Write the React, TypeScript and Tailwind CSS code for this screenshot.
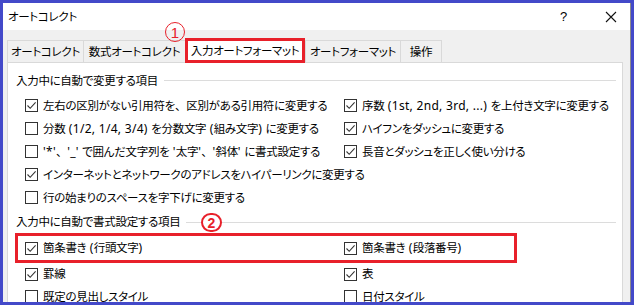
import React from 'react';

const font = "font-['Noto_Sans_CJK_JP','Noto_Sans',sans-serif] [font-feature-settings:'palt']";

// Latin runs are set a little wider and the ideographic comma keeps its full width, as in the dialog font
const Label: React.FC<{ text: string }> = ({ text }) => {
  const parts = text.split(/([\x20-\x7e]+|、)/).filter((p) => p !== '');
  return (
    <span className="whitespace-nowrap">
      {parts.map((p, i) =>
        p === '、' ? (
          <span key={i} className="[font-feature-settings:normal]">{p}</span>
        ) : /^[\x20-\x7e]+$/.test(p) ? (
          <span key={i} className="font-['Noto_Sans',sans-serif] text-[12px] tracking-[0.3px] whitespace-pre">{p}</span>
        ) : (
          <span key={i}>{p}</span>
        )
      )}
    </span>
  );
};

const CheckBox: React.FC<{ checked: boolean }> = ({ checked }) => (
  <div className="w-[13px] h-[13px] border border-[#333333] bg-white flex items-center justify-center shrink-0">
    {checked && (
      <svg width="11" height="11" viewBox="0 0 11 11">
        <path d="M1.5 5.5 L4.2 8.3 L9.6 2.4" fill="none" stroke="#333333" strokeWidth="1.1" />
      </svg>
    )}
  </div>
);

const Option: React.FC<{ label?: string; checked?: boolean; h?: string }> = ({ label, checked = false, h = 'h-[23px]' }) => (
  <div className={`${h} flex items-center gap-[5px]`}>
    {label !== undefined && (
      <>
        <CheckBox checked={checked} />
        <Label text={label} />
      </>
    )}
  </div>
);

const SectionTitle: React.FC<{ title: string; className?: string; children?: React.ReactNode }> = ({ title, className = '', children }) => (
  <div className={`relative flex items-center gap-[6px] pl-[8px] pr-[6px] ${className}`}>
    <span className="whitespace-nowrap">{title}</span>
    <div className="flex-1 h-px bg-[#dcdcdc]" />
    {children}
  </div>
);

const App: React.FC = () => {
  const tabs = [
    { label: 'オートコレクト', w: 'w-[76px]' },
    { label: '数式オートコレクト', w: 'w-[102px]' },
    { label: '入力オートフォーマット', w: 'w-[120px]', active: true },
    { label: 'オートフォーマット', w: 'w-[95px]' },
    { label: '操作', w: 'w-[42px]' },
  ];

  return (
    <div className={`w-[634px] h-[305px] border-[3px] border-[#4349c9] overflow-hidden flex flex-col bg-white text-[11.5px] tracking-[-0.3px] text-black ${font}`}>
      {/* title bar */}
      <div className="h-[27px] shrink-0 flex items-center bg-white pl-[5px] pr-[13px] border-r border-[#8c8c8c]">
        <span className="flex-1">オートコレクト</span>
        <span className="text-[13px] mr-[38px] font-['Liberation_Sans',sans-serif]">?</span>
        <svg width="12" height="12" viewBox="0 0 12 12">
          <path d="M1 1 L11 11 M11 1 L1 11" stroke="#111111" strokeWidth="1.1" />
        </svg>
      </div>

      {/* body */}
      <div className="relative flex-1 flex flex-col bg-[#f0f0f0] pt-[8px] pl-[4px] pr-[7px] border-r border-[#8c8c8c]">
        {/* ① marker */}
        <div className="absolute left-[162px] top-[-8px] w-[20px] h-[20px] rounded-full border-[1.5px] border-[#e8202a] flex items-center justify-center text-[#e8202a] text-[15px] leading-none tracking-normal font-['Liberation_Sans',sans-serif]">
          1
        </div>

        {/* tabs */}
        <div className="h-[24px] flex items-end shrink-0">
          {tabs.map((t, i) =>
            t.active ? (
              <div
                key={i}
                className={`${t.w} h-[25px] mb-[-1px] relative z-10 bg-white border-[3px] border-[#e8202a] flex items-center justify-center whitespace-nowrap`}
              >
                {t.label}
              </div>
            ) : (
              <div
                key={i}
                className={`${t.w} h-[22px] border-t border-l border-[#d9d9d9] ${i === tabs.length - 1 ? 'border-r' : ''} flex items-center justify-center whitespace-nowrap`}
              >
                {t.label}
              </div>
            )
          )}
        </div>

        {/* panel */}
        <div className="flex-1 bg-white border border-[#d9d9d9] pt-[6px]">
          <SectionTitle title="入力中に自動で変更する項目" className="h-[23px]" />
          <div className="grid grid-cols-[319px_1fr] pl-[17px] mt-[2px]">
            <Option label="左右の区別がない引用符を、区別がある引用符に変更する" checked />
            <Option label="序数 (1st, 2nd, 3rd, ...) を上付き文字に変更する" checked />
            <Option label="分数 (1/2, 1/4, 3/4) を分数文字 (組み文字) に変更する" />
            <Option label="ハイフンをダッシュに変更する" checked />
            <Option label="'*'、'_' で囲んだ文字列を '太字'、'斜体' に書式設定する" />
            <Option label="長音とダッシュを正しく使い分ける" checked />
            <Option label="インターネットとネットワークのアドレスをハイパーリンクに変更する" checked />
            <Option />
            <Option label="行の始まりのスペースを字下げに変更する" />
            <Option />
          </div>

          <SectionTitle title="入力中に自動で書式設定する項目" className="h-[22px] mt-[2px]">
            <div className="absolute left-[193px] top-[2px] w-[21px] h-[19px] rounded-full border-2 border-[#e8202a] bg-white flex items-center justify-center text-[#e8202a] text-[14px] font-bold leading-none tracking-normal font-['Liberation_Sans',sans-serif]">
              2
            </div>
          </SectionTitle>
          <div className="ml-[7px] w-[502px] h-[30px] border-[3px] border-[#e8202a] grid grid-cols-[319px_1fr] items-center pl-[7px]">
            <Option label="箇条書き (行頭文字)" checked />
            <Option label="箇条書き (段落番号)" checked />
          </div>
          <div className="grid grid-cols-[319px_1fr] pl-[17px]">
            <Option label="罫線" checked h="h-[22px]" />
            <Option label="表" checked h="h-[22px]" />
            <Option label="既定の見出しスタイル" />
            <Option label="日付スタイル" />
          </div>
        </div>
      </div>
    </div>
  );
};

export default App;
